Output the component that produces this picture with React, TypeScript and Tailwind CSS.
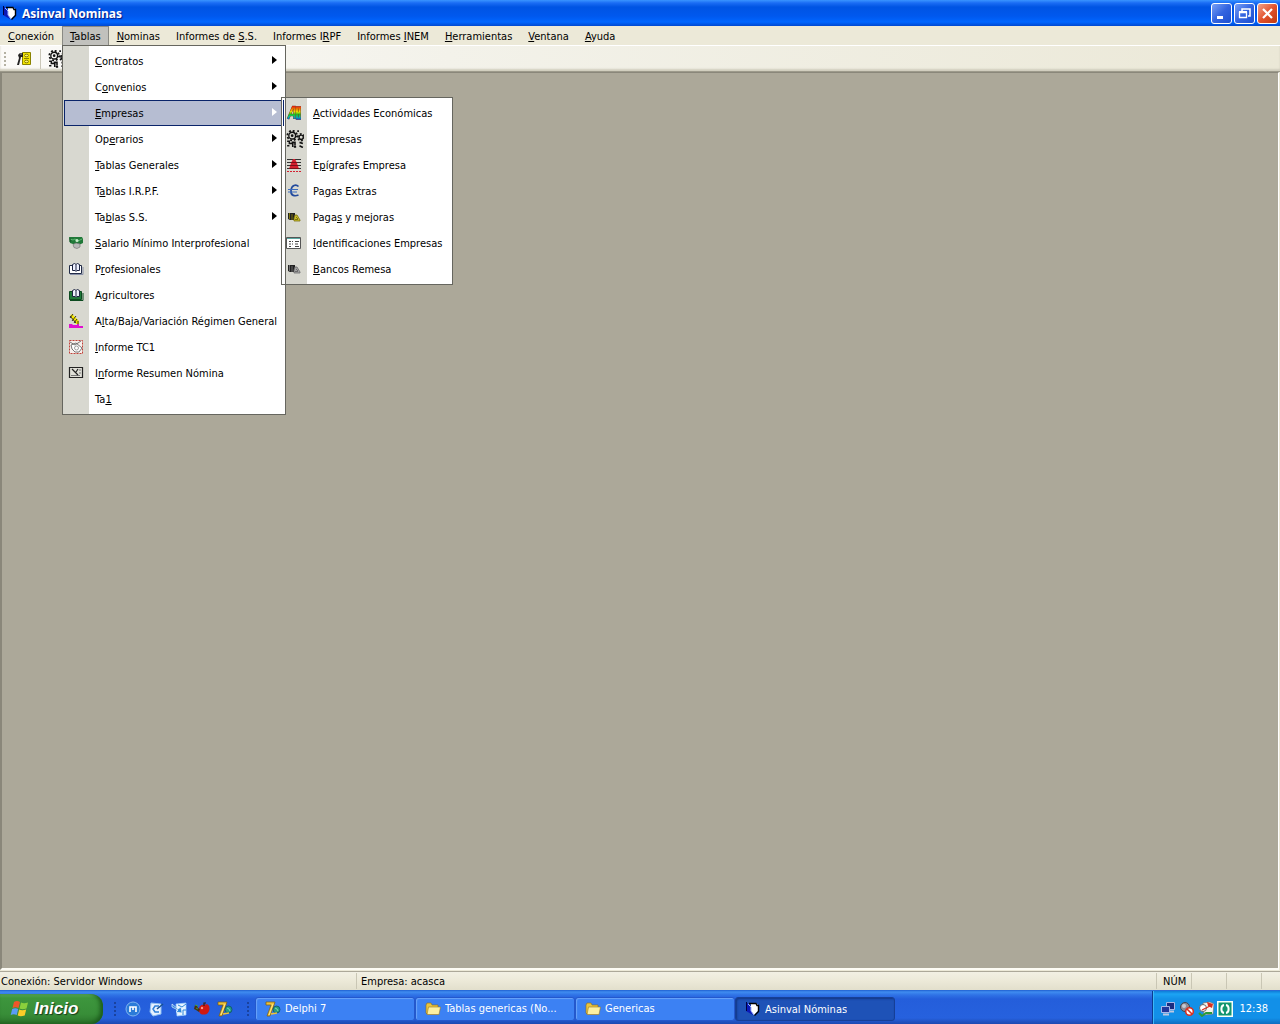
import React from "react";

type IconProps = { className?: string };

function Svg({ size = 16, className = "", children }: { size?: number; className?: string; children: React.ReactNode }) {
  return (
    <svg width={size} height={size} viewBox="0 0 16 16" fill="none" aria-hidden="true" className={`shrink-0 ${className}`}>
      {children}
    </svg>
  );
}

function AppIcon() {
  return (
    <Svg>
      <path d="M1 1l5 4 2 9-7-4z" fill="#0a18b8" />
      <path d="M1.500 1v9" stroke="#000040" />
      <path d="M6 2h5l2 2v6l-4 4-3-4z" fill="#fff" />
      <path d="M4 2.500h7.500M11 2.500l1 2h1.500v6L9.500 14.500" stroke="#000" strokeWidth="1.400" />
      <path d="M3 3l3 3v4l3 4" stroke="#9fb4ff" />
    </Svg>
  );
}

function DoorIcon() {
  return (
    <Svg>
      <path d="M6.500 1.500h8v12h-8z" fill="#f4e400" stroke="#8a8200" />
      <path d="M8 7.500h5" stroke="#8a8200" />
      <ellipse cx="10.500" cy="4.500" rx="2" ry="1.300" fill="#fff36a" stroke="#6b6400" strokeWidth=".8" />
      <ellipse cx="10.500" cy="10.500" rx="2" ry="1.300" fill="#fff36a" stroke="#6b6400" strokeWidth=".8" />
      <path d="M2 4l2-2h3v4H5L3 14H1L3 7z" fill="#222" />
      <path d="M4 3h2" stroke="#999" />
    </Svg>
  );
}

function GearsIcon({ className }: IconProps) {
  return (
    <Svg size={18} className={className}>
      <circle cx="5.500" cy="5" r="3" stroke="#111" strokeWidth="1.200" />
      <circle cx="5.500" cy="5" r="4.300" stroke="#111" strokeWidth="1.600" strokeDasharray="1.700 1.670" />
      <circle cx="5.500" cy="5" r="1.200" fill="#111" />
      <circle cx="13.500" cy="6.500" r="1.900" stroke="#111" strokeWidth="1.200" />
      <circle cx="13.500" cy="6.500" r="3" stroke="#111" strokeWidth="1.500" strokeDasharray="1.570 1.570" />
      <path d="M1 10h2v2h3v3M1 14h2M5 11h3v3M7 15h2" stroke="#111" strokeWidth="1.400" />
      <path d="M12 11l3 1M12 14l3 1.500M10 1h1.500" stroke="#111" strokeWidth="1.500" />
    </Svg>
  );
}

function RainbowAeIcon() {
  const bands = ["#e01010", "#f07800", "#f0e000", "#20c020", "#00b8b0", "#1830d0"];
  return (
    <Svg>
      <defs>
        <linearGradient id="rainbow" gradientUnits="userSpaceOnUse" x1="0" y1="1" x2="0" y2="15">
          {bands.map((c, i) => (
            <stop key={c} offset={i / (bands.length - 1)} stopColor={c} />
          ))}
        </linearGradient>
      </defs>
      <path d="M2 14L7 2h1.500V14M4 10h4" stroke="#703818" strokeWidth="2.600" />
      <path d="M15 2.500h-4l0 11h4M11 8h3.500M13.500 3v10" stroke="#703818" strokeWidth="2.600" />
      <path d="M2 14L7 2h1.500V14M4 10h4" stroke="url(#rainbow)" strokeWidth="1.900" />
      <path d="M15 2.500h-4l0 11h4M11 8h3.500M13.500 3v10" stroke="url(#rainbow)" strokeWidth="1.900" />
    </Svg>
  );
}

function EpigraphIcon() {
  return (
    <Svg>
      <path d="M1 2.500h14M1 5.500h14M1 8.500h14M1 11.500h14" stroke="#333" strokeWidth="1" />
      <path d="M7 2h2l2 4 1 3 1 3H3l1-3 1-3z" fill="#d42030" />
      <path d="M5 5.500h6M4 8.500h8M3 11.500h10" stroke="#7a101a" />
      <path d="M1 14.500h14" stroke="#d42030" strokeDasharray="2 1" />
    </Svg>
  );
}

function EuroIcon() {
  return (
    <Svg>
      <path d="M12.500 3.500C10 1 5.500 2 5 7.500S9 13.500 12.500 12" stroke="#234a9c" strokeWidth="1.700" />
      <path d="M2 6.500h10M2 9h9" stroke="#3b6cc0" strokeWidth="1.200" />
    </Svg>
  );
}

function CoinsIcon({ tone }: { tone: "gold" | "gray" }) {
  const light = tone === "gold" ? "#c8bd2c" : "#a4a4a4";
  const mid = tone === "gold" ? "#7d7410" : "#6c6c6c";
  return (
    <Svg>
      <path d="M2 4h7v7H4l-2-1z" fill="#222" />
      <path d="M3.500 4v6M6 5v6" stroke={mid} strokeWidth="1" />
      <path d="M9 6l2 0 3 5v1H8V9z" fill={light} stroke={mid} strokeWidth=".8" />
      <path d="M10 8l2 2M9 10.500h3" stroke={mid} />
    </Svg>
  );
}

function FormIcon() {
  return (
    <Svg>
      <path d="M.500 2.500h14v11H.500z" fill="#fff" stroke="#555" />
      <path d="M1 3.500h13" stroke="#5aa7a0" />
      <path d="M3 6.500h2M3 9h2M3 11.500h2M6 6.500h1M6 9h1M9 6.500h4M9 9h3M9 11.500h4" stroke="#444" />
    </Svg>
  );
}

function MoneyIcon() {
  return (
    <Svg>
      <path d="M1 2h13l1 2v4l-2 1-5 1-6-2z" fill="#207838" />
      <path d="M2 4l3 1 2-1 3 2 4-2" stroke="#5cb870" />
      <circle cx="9" cy="5.500" r="1.500" fill="#c7eccb" />
      <path d="M5 9.500l3-1.500 4 1v3l-3 1.500-3-1z" fill="#b8b8b8" stroke="#777" strokeWidth=".7" />
      <path d="M2 3v4" stroke="#0d4b20" />
    </Svg>
  );
}

function BookIcon({ tone }: { tone: "white" | "green" }) {
  const green = tone === "green";
  return (
    <Svg>
      <path d="M1.500 4.500h12v8h-12z" fill={green ? "#1f7a3a" : "#fff"} stroke={green ? "#0d4b20" : "#222c48"} />
      <path d="M2 13.500h13V6" stroke={green ? "#0d4b20" : "#8890a8"} />
      <path d="M4.500 3.500l2-1 1.500 1 1.500-1 2 1v6H9L8 10.500 7 9.500H4.500z" fill="#eef1ff" stroke="#1b2340" />
      <path d="M8 4v6" stroke="#1b2340" />
    </Svg>
  );
}

function PencilIcon() {
  return (
    <Svg>
      <path d="M2 3l2-2 7 7v3H8z" fill="#f6e800" />
      <path d="M2 3l6 7M5 1L2 5M8 3L4 8M9 6l-3 4M10 8v3" stroke="#222" strokeWidth=".9" />
      <path d="M1 11h3l1 1h4v-1h2v2h4v2H1z" fill="#e010d0" />
    </Svg>
  );
}

function ReportIcon() {
  return (
    <Svg>
      <path d="M1.500 1.500h13v13h-13z" fill="#f7efec" stroke="#c04038" strokeDasharray="2 1" />
      <path d="M3 6l5-2 6 5-3 4H7L4 10z" fill="#fff" stroke="#555" strokeWidth=".8" />
      <path d="M2 3l5 3 6-4" stroke="#555" strokeWidth=".8" />
      <circle cx="8.500" cy="9" r="2" stroke="#888" strokeWidth=".8" />
    </Svg>
  );
}

function SummaryIcon() {
  return (
    <Svg>
      <path d="M1.500 2.500h13v10h-13z" fill="#e0e0d8" stroke="#222" strokeWidth="1.200" />
      <path d="M3 10.500h9M11 5h2M11 8h2" stroke="#777" />
      <path d="M4 4l6 6M10 4L8 7" stroke="#222" strokeWidth="1.200" />
    </Svg>
  );
}

function DelphiIcon() {
  return (
    <Svg>
      <path d="M1 1h9l-1 3-4 11H2L6 4H1z" fill="#edc23c" stroke="#7d5a08" strokeWidth=".7" />
      <path d="M4 14l4-11" stroke="#fff0a0" strokeWidth=".8" />
      <circle cx="11.500" cy="8.500" r="3.500" fill="#259a86" stroke="#0c4a5c" strokeWidth=".7" />
      <path d="M10 7l2 1 1 2" stroke="#7ce0a0" />
      <path d="M6 13l6-1" stroke="#edc23c" strokeWidth="1.500" />
    </Svg>
  );
}

function FolderIcon() {
  return (
    <Svg>
      <path d="M1 4l1-2h4l1 2h6v9H2L1 12z" fill="#e8c440" stroke="#8a6a18" strokeWidth=".6" />
      <path d="M3.500 6h12L14 13.500H2z" fill="#fdf0a0" stroke="#a07a20" strokeWidth=".6" />
    </Svg>
  );
}

function MaxthonIcon() {
  return (
    <Svg>
      <circle cx="8" cy="8" r="7" fill="#2b7bd8" stroke="#7fb4f0" />
      <path d="M5 11V6h6v5M8 6v3" stroke="#fff" strokeWidth="1.600" />
    </Svg>
  );
}

function DesktopIcon() {
  return (
    <Svg>
      <path d="M3 2l10 1v10l-8 2-3-4z" fill="#e8f2ff" stroke="#8fc0f4" />
      <path d="M11 5H7L5 8l2 3h4" stroke="#2f80d8" strokeWidth="1.500" />
      <path d="M15 3L9 8" stroke="#175090" strokeWidth="1.500" />
    </Svg>
  );
}

function OutlookIcon() {
  return (
    <Svg>
      <path d="M5 3l10-1v12l-9 1z" fill="#e8f4ff" stroke="#9fd0ff" strokeWidth=".7" />
      <path d="M1 3l6 5 3-2 1 6-6-1 2-2-6-3z" fill="#2d86dc" stroke="#fff" strokeWidth=".6" />
      <path d="M7 4l4 2 4-3M12 14V9h3" stroke="#2d86dc" />
    </Svg>
  );
}

function AppleIcon() {
  return (
    <Svg>
      <path d="M10 4c4-2 6 1 5.500 4.500S12 14 10 13.500C7 14 4.500 11.500 5 8c0-3 3-5 5-4z" fill="#d01810" />
      <path d="M1 4l2 1 1 2 2 1-1 3-3-2-2-1z" fill="#4a3010" />
      <path d="M1 4l3 1M2 7l2 1" stroke="#3fa038" />
      <path d="M10 5V2h2" stroke="#3a2008" strokeWidth="1.200" />
      <circle cx="8" cy="7" r="1.200" fill="#ff9a80" />
    </Svg>
  );
}

function WindowsFlag() {
  return (
    <svg width="20" height="18" viewBox="0 0 20 18" aria-hidden="true" className="shrink-0">
      <path d="M4 2c3-1.500 4-1 6 0L8.500 8c-2-1-4-1-6 0z" fill="#f0562a" />
      <path d="M11 2.500c2 1 4 1 7 0L16.500 8.500c-3 1-5 1-7 0z" fill="#8ad03c" />
      <path d="M2.200 9c2-1 4-1 6 0L6.700 15c-2-1-4-1-6 0z" fill="#5a9cf6" />
      <path d="M9.200 9.500c2 1 4 1 7 0L14.700 15.500c-3 1-5 1-7 0z" fill="#fccc28" />
    </svg>
  );
}

function NetworkIcon() {
  return (
    <Svg>
      <path d="M6.500 1.500h8v7h-8z" fill="#1a2c80" stroke="#a8b8e8" />
      <path d="M1.500 5.500h8v6h-8z" fill="#22389c" stroke="#a8b8e8" />
      <path d="M3 13.500h6M10 10.500h4" stroke="#c0c8e0" strokeWidth="2" />
    </Svg>
  );
}

function VolumeIcon() {
  return (
    <Svg>
      <circle cx="6" cy="6" r="4.500" fill="#8c8c98" stroke="#44444c" />
      <circle cx="5" cy="5" r="2" fill="#c8c8d0" />
      <circle cx="10.500" cy="10.500" r="3.800" fill="#fff" stroke="#d83020" strokeWidth="1.600" />
      <path d="M8 8l5 5" stroke="#d83020" strokeWidth="1.600" />
    </Svg>
  );
}

function ChartIcon() {
  return (
    <Svg>
      <path d="M5 2l7-1 4 2-1 10-9 1z" fill="#f6f6f0" stroke="#777" strokeWidth=".7" />
      <path d="M9 1l6 2-1 4-4-2z" fill="#d83020" />
      <circle cx="5" cy="7" r="3.500" fill="#fff" stroke="#666" />
      <path d="M1 12l3 3 4-3 6 0" stroke="#2a9a38" strokeWidth="1.800" />
      <path d="M4 9l8-4" stroke="#d83020" strokeWidth="1.300" />
    </Svg>
  );
}

function SyncIcon() {
  return (
    <Svg>
      <path d="M0 0h16v16H0z" fill="#f4fffa" />
      <path d="M1.500 1.500h13v13h-13z" fill="#13956f" />
      <path d="M7 4C3.500 4.500 3.500 11.500 7 12M9 4c3.500.5 3.500 7.500 0 8" stroke="#fff" strokeWidth="2" />
    </Svg>
  );
}

/* Renders a caption whose access key is the letter after "&". */
function Caption({ text }: { text: string }) {
  const at = text.indexOf("&");
  return (
    <span className="pt-[2px] whitespace-pre">
      {text.slice(0, at)}
      <u>{text[at + 1]}</u>
      {text.slice(at + 2)}
    </span>
  );
}

type Item = { text: string; icon?: React.ReactNode; sub?: boolean };

const tablas: Item[] = [
  { text: "&Contratos", sub: true },
  { text: "C&onvenios", sub: true },
  { text: "&Empresas", sub: true },
  { text: "Op&erarios", sub: true },
  { text: "&Tablas Generales", sub: true },
  { text: "T&ablas I.R.P.F.", sub: true },
  { text: "Ta&blas S.S.", sub: true },
  { text: "&Salario Mínimo Interprofesional", icon: <MoneyIcon /> },
  { text: "P&rofesionales", icon: <BookIcon tone="white" /> },
  { text: "A&gricultores", icon: <BookIcon tone="green" /> },
  { text: "A&lta/Baja/Variación Régimen General", icon: <PencilIcon /> },
  { text: "&Informe TC1", icon: <ReportIcon /> },
  { text: "I&nforme Resumen Nómina", icon: <SummaryIcon /> },
  { text: "Ta&1" },
];

const empresas: Item[] = [
  { text: "&Actividades Económicas", icon: <RainbowAeIcon /> },
  { text: "&Empresas", icon: <GearsIcon /> },
  { text: "E&pígrafes Empresa", icon: <EpigraphIcon /> },
  { text: "Pa&gas Extras", icon: <EuroIcon /> },
  { text: "Paga&s y mejoras", icon: <CoinsIcon tone="gold" /> },
  { text: "&Identificaciones Empresas", icon: <FormIcon /> },
  { text: "&Bancos Remesa", icon: <CoinsIcon tone="gray" /> },
];

function EmpresasMenu() {
  return (
    <div className="absolute -top-[3px] left-[217px] flex w-[172px] border border-[#66665f] bg-white">
      <div className="my-[2px] w-[3px] shrink-0">
        <div className="ml-px h-[26px] w-px bg-[#0a246a]" />
      </div>
      <ul className="flex-1 border-l border-[#66665f] bg-[linear-gradient(to_right,#d8d8d0_21px,#ffffff_21px)] py-[2px]">
        {empresas.map((item) => (
          <li key={item.text}>
            <button className="flex h-[26px] w-full items-center text-left">
              <span className="flex w-[27px] shrink-0 items-center">{item.icon}</span>
              <Caption text={item.text} />
            </button>
          </li>
        ))}
      </ul>
    </div>
  );
}

function TablasMenu() {
  return (
    <ul className="absolute top-full -left-px z-10 w-[224px] border border-[#66665f] bg-[linear-gradient(to_right,#d8d8d0_26px,#ffffff_26px)] px-px py-[2px]">
      {tablas.map((item) => {
        const open = item.text === "&Empresas";
        return (
          <li key={item.text} className="relative">
            <button
              className={`flex h-[26px] w-full items-center border text-left ${
                open ? "border-[#0a246a] bg-[#b6bdd2]" : "border-transparent"
              }`}
            >
              <span className="flex w-[30px] shrink-0 items-center pl-[3px]">{item.icon}</span>
              <Caption text={item.text} />
              {item.sub && (
                <svg width="5" height="8" viewBox="0 0 5 8" className="mr-[6px] mb-[2px] ml-auto" aria-hidden="true">
                  <path d="M0 0l5 4-5 4z" fill={open ? "#fff" : "#000"} />
                </svg>
              )}
            </button>
            {open && <EmpresasMenu />}
          </li>
        );
      })}
    </ul>
  );
}

const menus = ["&Conexión", "&Tablas", "&Nominas", "Informes de &S.S.", "Informes I&RPF", "Informes &INEM", "&Herramientas", "&Ventana", "&Ayuda"];

function MenuBar() {
  return (
    <nav className="flex h-[19px] bg-[#ece9d8]">
      {menus.map((m) =>
        m === "&Tablas" ? (
          <div key={m} className="relative border border-b-0 border-[#8a8a84] bg-[#c1c1bd]">
            <button className="flex h-full items-center px-[7px]">
              <Caption text={m} />
            </button>
            <TablasMenu />
          </div>
        ) : (
          <button key={m} className="flex items-center px-2">
            <Caption text={m} />
          </button>
        ),
      )}
    </nav>
  );
}

function WindowButton({ label, close, children }: { label: string; close?: boolean; children: React.ReactNode }) {
  return (
    <button
      aria-label={label}
      className={`flex size-[21px] items-center justify-center rounded-[3px] border border-white ${
        close ? "bg-linear-to-br from-[#f0a088] via-[#e2522c] to-[#c03a10]" : "bg-linear-to-br from-[#7a9ff5] via-[#3364e0] to-[#1c4fd0]"
      }`}
    >
      <svg width="17" height="17" viewBox="0 0 17 17" fill="none" stroke="#fff" aria-hidden="true">
        {children}
      </svg>
    </button>
  );
}

function TitleBar() {
  return (
    <header className="flex h-[26px] items-center bg-[linear-gradient(to_bottom,#3a94ff_0px,#1a6cf4_3px,#0054e3_7px,#0058ee_16px,#0066ff_22px,#0048d0_26px)] pr-[2px] pl-[2px]">
      <AppIcon />
      <h1 className="ml-1 flex-1 pt-px font-['Noto_Sans'] text-[12px] leading-4 font-bold text-white [text-shadow:1px_1px_1px_#0a1883]">
        Asinval Nominas
      </h1>
      <div className="flex gap-[2px]">
        <WindowButton label="Minimizar">
          <path d="M4 12.500h6" strokeWidth="3" />
        </WindowButton>
        <WindowButton label="Restaurar">
          <path d="M6 6V4h8v7h-2" strokeWidth="1.500" />
          <path d="M3.500 7.500h7v5h-7z" strokeWidth="1.300" />
          <path d="M3 7h8" strokeWidth="2" />
        </WindowButton>
        <WindowButton label="Cerrar" close>
          <path d="M4 4l9 9M13 4l-9 9" strokeWidth="2.200" />
        </WindowButton>
      </div>
    </header>
  );
}

function Grip({ className }: IconProps) {
  return (
    <div className={`grid gap-[2px] ${className}`}>
      {[0, 1, 2, 3].map((i) => (
        <div key={i} className="size-[2px] bg-current" />
      ))}
    </div>
  );
}

function ToolBar() {
  return (
    <div className="flex h-[27px] items-center border-t border-b border-t-white border-b-[#9d9a8b] bg-[linear-gradient(to_right,#fbfaf8,#f3f2ea_35%,#ebe8d7)] shadow-[inset_0_-2px_2px_#d0cdbd]">
      <Grip className="ml-1 text-[#b4b1a3]" />
      <button aria-label="Salir" className="ml-[10px]">
        <DoorIcon />
      </button>
      <div className="ml-2 h-5 w-px bg-[#c9c6b8]" />
      <button aria-label="Empresas" className="ml-[7px]">
        <GearsIcon />
      </button>
    </div>
  );
}

function StatusBar() {
  return (
    <footer className="flex h-[19px] items-center border-t border-[#aca899] bg-linear-to-b from-[#f2f0e4] via-[#ece9d8] to-[#e2dfcc]">
      <span className="w-[356px] pt-[2px] pl-px">Conexión: Servidor Windows</span>
      <span className="flex-1 border-l border-[#c9c6b4] pt-[2px] pl-1">Empresa: acasca</span>
      <span className="w-[35px] border-l border-[#c9c6b4] pt-[2px] pl-[6px]">NÚM</span>
      <span className="h-4 w-[35px] border-l border-[#c9c6b4]" />
      <span className="h-4 w-[35px] border-l border-[#c9c6b4]" />
      <span className="h-4 w-[19px] border-l border-[#c9c6b4]" />
    </footer>
  );
}

function TaskButton({ text, icon, active }: { text: string; icon: React.ReactNode; active?: boolean }) {
  return (
    <button
      className={`flex h-6 w-[160px] items-center gap-1 rounded-[3px] border pl-[9px] text-left text-white ${
        active
          ? "border-[#163f96] bg-[#1e52b7] shadow-[inset_1px_1px_2px_#123684]"
          : "border-[#2458cc] bg-[#3c81f3] shadow-[inset_1px_1px_1px_#6aa4fa]"
      }`}
    >
      {icon}
      <span className={active ? "truncate pt-[2px]" : "truncate"}>{text}</span>
    </button>
  );
}

function TaskBar() {
  return (
    <div className="flex h-[34px] items-stretch bg-[linear-gradient(to_bottom,#1f5fd0_0px,#3f8cf0_2px,#2f72e6_5px,#245edb_9px,#2661de_28px,#1c48b0_34px)]">
      <button className="mt-1 flex w-[103px] shrink-0 items-center gap-1 rounded-r-xl bg-[linear-gradient(to_bottom,#5fae5f_0px,#3d963d_4px,#388e38_20px,#2c742c_30px)] pl-[10px] shadow-[inset_-3px_-1px_4px_#1c5c1c] [text-shadow:1px_1px_1px_#1a3a1a]">
        <WindowsFlag />
        <span className="font-['Liberation_Sans'] text-[17px] leading-5 font-bold text-white italic">Inicio</span>
      </button>
      <div className="flex items-center pt-1">
        <Grip className="ml-[11px] text-[#1a429e]" />
        <div className="ml-[9px] flex gap-[7px]">
          <button aria-label="Maxthon"><MaxthonIcon /></button>
          <button aria-label="Mostrar escritorio"><DesktopIcon /></button>
          <button aria-label="Outlook"><OutlookIcon /></button>
          <button aria-label="Manzana"><AppleIcon /></button>
          <button aria-label="Delphi"><DelphiIcon /></button>
        </div>
        <Grip className="ml-[14px] text-[#1a429e]" />
      </div>
      <div className="ml-[6px] flex flex-1 items-center pt-1">
        <TaskButton text="Delphi 7" icon={<DelphiIcon />} />
        <TaskButton text="Tablas genericas (No..." icon={<FolderIcon />} />
        <TaskButton text="Genericas" icon={<FolderIcon />} />
        <TaskButton text="Asinval Nóminas" icon={<AppIcon />} active />
      </div>
      <div className="mt-px flex items-center gap-[3px] border-l border-[#0c3c90] bg-[linear-gradient(to_bottom,#0f7cd8_0px,#1ca4f4_3px,#1290e8_8px,#1290e8_27px,#0e6cc0_33px)] pt-[2px] pr-3 pl-[7px] text-white shadow-[inset_1px_0_0_#3cb8f8]">
        <NetworkIcon />
        <VolumeIcon />
        <ChartIcon />
        <SyncIcon />
        <span className="ml-[3px]">12:38</span>
      </div>
    </div>
  );
}

export default function App() {
  return (
    <div className="flex min-h-screen flex-col bg-[#ece9d8] font-['DejaVu_Sans_Condensed','DejaVu_Sans',sans-serif] text-[11px] leading-[14px] text-black">
      <TitleBar />
      <MenuBar />
      <ToolBar />
      <main className="mr-px flex-1 border-2 border-t border-r border-[#8a877a] border-r-white border-b-[#fdfcf5] bg-[#aca899]" />
      <div className="h-px bg-[#ece9d8]" />
      <StatusBar />
      <TaskBar />
    </div>
  );
}
